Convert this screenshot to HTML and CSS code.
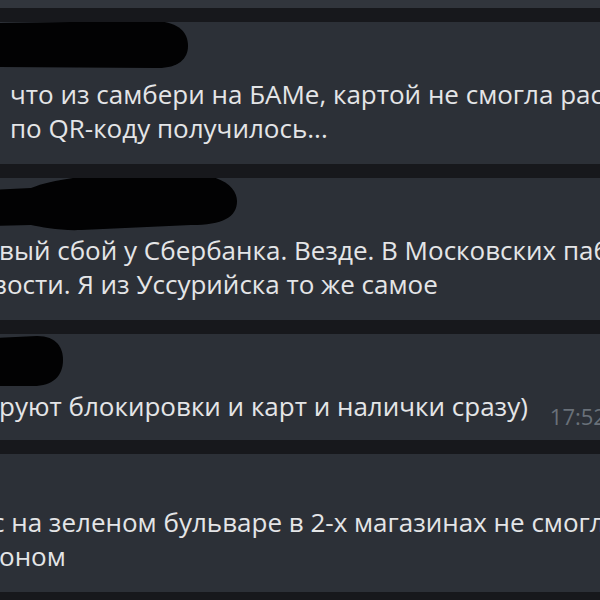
FILE: index.html
```html
<!DOCTYPE html>
<html lang="ru">
<head>
    <meta charset="UTF-8" />
    <meta name="viewport" content="width=device-width, initial-scale=1" />
    <title>Чат</title>
    <link rel="stylesheet" href="styles.css">
</head>
<body>
    <div class="chat">
        <div class="msg msg-prev"></div>

        <div class="msg">
            <svg class="mark mark-1" width="200" height="50" viewBox="0 0 200 50">
                <path d="M0 2 L160 0 C190 0 196 14 196 25 C196 38 186 47 166 47 L0 46 Z" fill="#020203"/>
            </svg>
            <div class="author"></div>
            <div class="text">
                <div class="line">что из самбери на БАМе, картой не смогла рассчитаться</div>
                <div class="line">по QR-коду получилось...</div>
            </div>
        </div>

        <div class="msg">
            <svg class="mark mark-2" width="250" height="62" viewBox="0 0 250 62">
                <path d="M0 17 L40 15 C70 3 120 0 190 0 C230 0 246 14 246 28 C246 44 232 52 200 52 L90 57 C70 58 50 54 40 52 L0 53 Z" fill="#020203"/>
            </svg>
            <div class="author"></div>
            <div class="text">
                <div class="line edge">вый сбой у Сбербанка. Везде. В Московских пабликах</div>
                <div class="line cut">вости. Я из Уссурийска то же самое</div>
            </div>
        </div>

        <div class="msg msg-short">
            <svg class="mark mark-3" width="70" height="52" viewBox="0 0 70 52">
                <path d="M0 2 L40 0 C60 0 66 12 66 24 C66 40 56 50 36 50 L0 50 Z" fill="#020203"/>
            </svg>
            <div class="author"></div>
            <div class="text">
                <div class="line line-time edge">
                    <span>руют блокировки и карт и налички сразу)</span>
                    <span class="time">17:52</span>
                </div>
            </div>
        </div>

        <div class="msg">
            <div class="author author-low"></div>
            <div class="text">
                <div class="line cut">с на зеленом бульваре в 2-х магазинах не смогли оплатить</div>
                <div class="line edge">оном</div>
            </div>
        </div>
    </div>
</body>
</html>
```

FILE: styles.css
```css
body {
    margin: 0;
    background: #17181c;
    font-family: "Open Sans", "Noto Sans", sans-serif;
    overflow: hidden;
}
.chat {
    display: flex;
    flex-direction: column;
    gap: 14px;
}
.msg {
    position: relative;
    background: #2c3037;
    padding: 8px 0 19px 10px;
    overflow: hidden;
}
.msg-prev {
    height: 8px;
    padding: 0;
    background: #31353c;
}
.msg-short {
    padding-bottom: 16px;
}
.author {
    height: 47px;
}
.author-low {
    height: 43px;
}
.mark {
    position: absolute;
    left: 0;
    top: 0;
}
.mark-1 {
    top: -1px;
    left: -8px;
}
.mark-2 {
    top: -5px;
    left: -9px;
}
.mark-3 {
    top: 2px;
    left: -3px;
}
.text {
    color: #e4e5e7;
    font-size: 26px;
    line-height: 34px;
}
.line {
    white-space: nowrap;
}
.edge {
    margin-left: -11px;
}
.cut {
    margin-left: -18px;
}
.line-time {
    display: flex;
    align-items: baseline;
}
.time {
    margin-left: 22px;
    color: #697079;
    font-size: 22px;
    position: relative;
    top: 9px;
}
```
